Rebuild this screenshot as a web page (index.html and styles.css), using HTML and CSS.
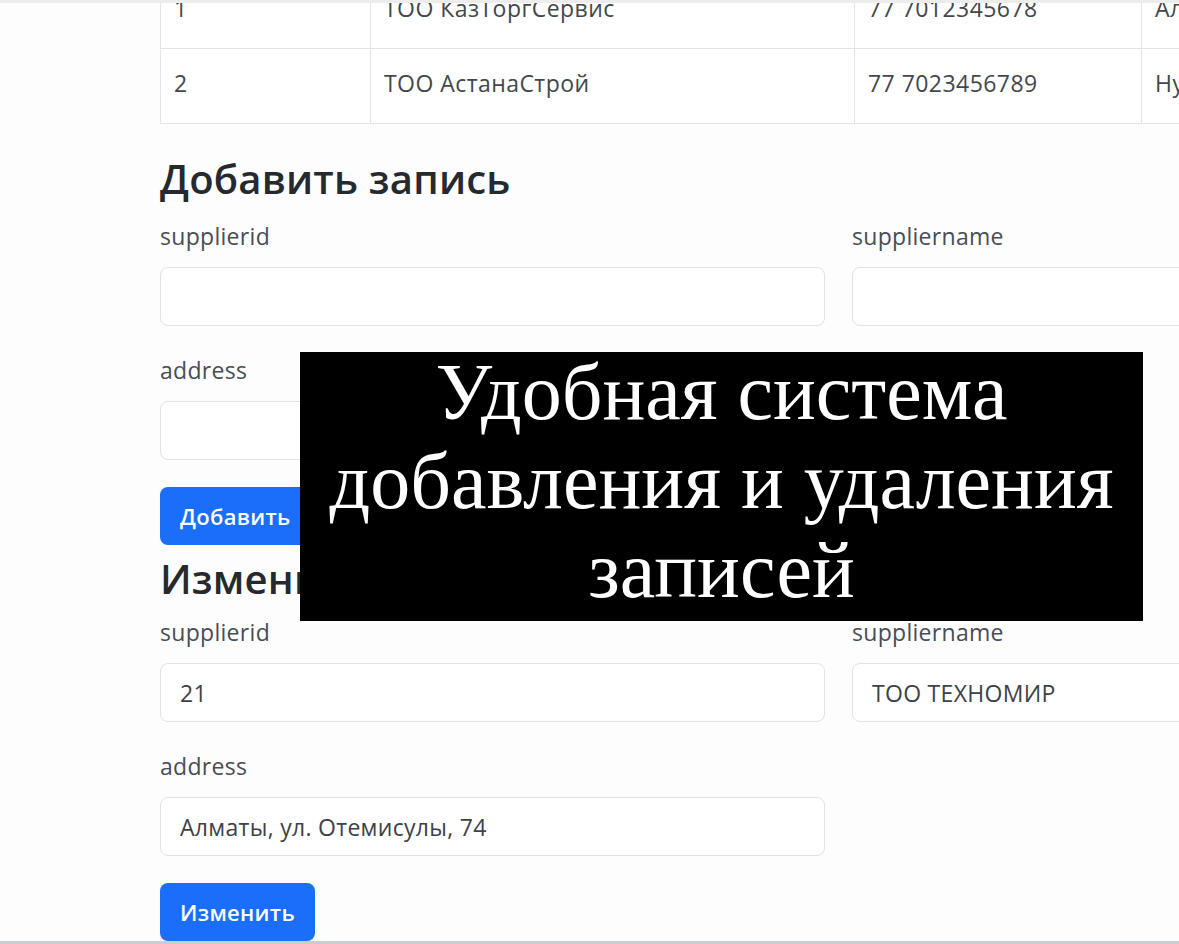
FILE: index.html
```html
<!DOCTYPE html>
<html lang="ru">
<head>
<meta charset="utf-8">
<title>Поставщики</title>
<link rel="stylesheet" href="styles.css">
</head>
<body>
<div class="viewport">
  <main class="page">
    <div class="table-wrap">
      <table class="data-table">
        <colgroup>
          <col class="c-id"><col class="c-name"><col class="c-phone"><col class="c-addr">
        </colgroup>
        <tbody>
          <tr><td>1</td><td>ТОО КазТоргСервис</td><td>77 7012345678</td><td>Алматы, ул. Абая, 10</td></tr>
          <tr><td>2</td><td>ТОО АстанаСтрой</td><td>77 7023456789</td><td>Нур-Султан, пр. Республики, 5</td></tr>
        </tbody>
      </table>
    </div>

    <section class="form-block">
      <h2 class="form-title first">Добавить запись</h2>
      <div class="form-grid">
        <div class="field">
          <label class="field-label">supplierid</label>
          <input class="field-input" type="text" value="">
        </div>
        <div class="field">
          <label class="field-label">suppliername</label>
          <input class="field-input" type="text" value="">
        </div>
        <div class="field">
          <label class="field-label">address</label>
          <input class="field-input" type="text" value="">
        </div>
      </div>
      <button class="btn-primary" type="button">Добавить</button>
    </section>

    <section class="form-block">
      <h2 class="form-title second">Изменить запись</h2>
      <div class="form-grid">
        <div class="field">
          <label class="field-label">supplierid</label>
          <input class="field-input" type="text" value="21">
        </div>
        <div class="field">
          <label class="field-label">suppliername</label>
          <input class="field-input" type="text" value="ТОО ТЕХНОМИР">
        </div>
        <div class="field">
          <label class="field-label">address</label>
          <input class="field-input" type="text" value="Алматы, ул. Отемисулы, 74">
        </div>
      </div>
      <button class="btn-primary" type="button">Изменить</button>
    </section>
  </main>

  <div class="caption">
    <p class="caption-text">Удобная система<br>добавления и удаления<br>записей</p>
  </div>
</div>
</body>
</html>
```

FILE: styles.css
```css
html, body {
  margin: 0;
  padding: 0;
  background: #ffffff;
  overflow: hidden;
}

.viewport {
  position: relative;
  height: 944px;
  box-sizing: border-box;
  border-top: 3px solid #ededed;
  border-bottom: 3px solid #c9cdd2;
  overflow: hidden;
  background: #fdfdfd;
}

.page {
  padding-left: 160px;
  width: 1600px;
  font-family: "Open Sans", "Noto Sans", sans-serif;
  color: #333a40;
}

.table-wrap {
  margin-top: -30px;
}

.data-table {
  border-collapse: collapse;
  table-layout: fixed;
  width: 1400px;
  font-size: 23px;
  letter-spacing: 0.45px;
  color: #43474c;
  background: #ffffff;
}

.c-id { width: 210px; }
.c-name { width: 484px; }
.c-phone { width: 287px; }
.c-addr { width: 419px; }

.data-table td {
  height: 75px;
  box-sizing: border-box;
  padding: 0 13px 7px 13px;
  border: 1px solid #e2e5e8;
  white-space: nowrap;
  vertical-align: middle;
}

.form-title {
  font-size: 40px;
  line-height: 47px;
  font-weight: 600;
  letter-spacing: 0.2px;
  color: #26292d;
  margin: 0;
}

.form-title.first {
  margin-top: 31px;
  margin-bottom: 18px;
}

.form-title.second {
  margin-top: 10px;
  margin-bottom: 14px;
}

.form-grid {
  display: grid;
  grid-template-columns: 665px 665px;
  column-gap: 27px;
  row-gap: 28px;
}

.field {
  display: flex;
  flex-direction: column;
}

.field-label {
  font-size: 23px;
  line-height: 33px;
  letter-spacing: 0.3px;
  margin-bottom: 14px;
  color: #484d53;
}

.field-input {
  height: 59px;
  box-sizing: border-box;
  border: 1px solid #e0e3e6;
  border-radius: 8px;
  padding: 0 19px;
  font-family: "Open Sans", "Noto Sans", sans-serif;
  font-size: 23px;
  letter-spacing: 0.3px;
  color: #3d4247;
  background: #ffffff;
  outline: none;
}

.btn-primary {
  margin-top: 27px;
  height: 58px;
  padding: 0 20px;
  border: none;
  border-radius: 8px;
  background: #1a6ef9;
  color: #ffffff;
  font-family: "Open Sans", "Noto Sans", sans-serif;
  font-size: 22px;
  letter-spacing: 0.3px;
  font-weight: 600;
  display: block;
}

.caption {
  position: absolute;
  left: 300px;
  top: 349px;
  width: 843px;
  height: 269px;
  background: #000000;
  display: flex;
  align-items: center;
  justify-content: center;
  overflow: hidden;
}

.caption-text {
  margin: -10px 0 0 0;
  font-family: "Liberation Serif", "Times New Roman", serif;
  font-size: 80px;
  line-height: 89px;
  color: #ffffff;
  text-align: center;
}
```
